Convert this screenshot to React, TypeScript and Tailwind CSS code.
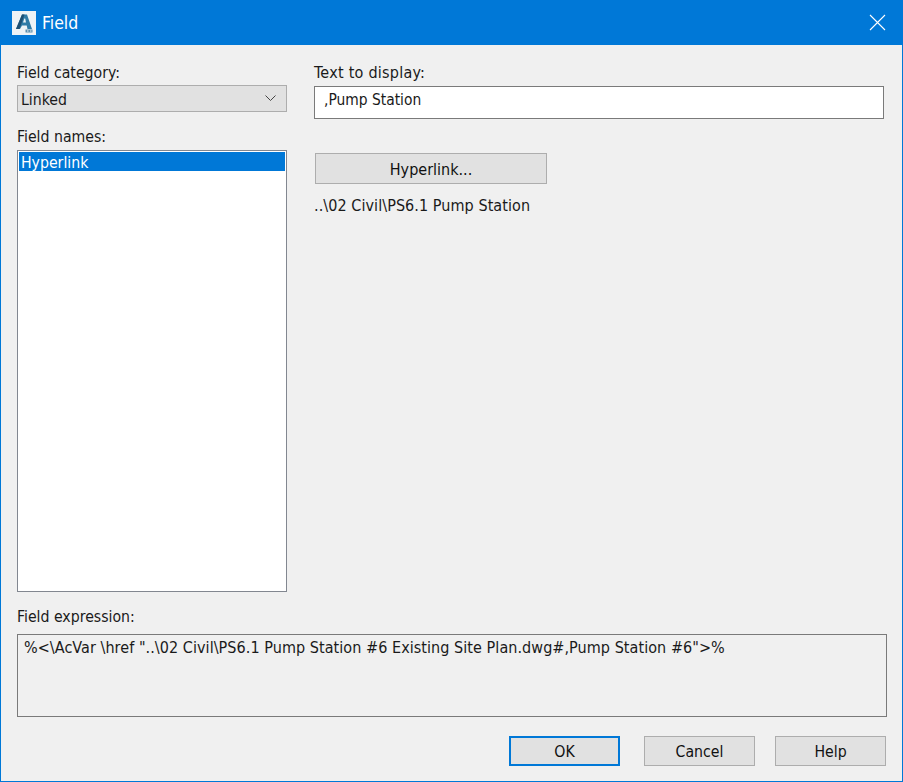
const font = "font-['DejaVu_Sans_Condensed','Noto_Sans',sans-serif]";

function AutoCadIcon() {
  return (
    <div className="flex h-6 w-6 items-center justify-center bg-[#eef3f6]">
      <svg width="24" height="24" viewBox="0 0 24 24">
        <path d="M4 18 L10 3.5 H15 L20 18 H15.5 L14.7 14.5 H10 L8 18 Z" fill="#2f7ba6" />
        <path d="M12.3 7.5 L11 11.5 H14 L13.2 7.5 Z" fill="#eef3f6" />
        <path d="M10 3.5 H12.5 L7.5 18 H4 Z" fill="#1d4f73" />
        <rect x="13.5" y="18.5" width="7" height="3" fill="#5b8fae" />
        <rect x="15" y="19.5" width="1.5" height="1" fill="#eef3f6" />
        <rect x="18" y="19.5" width="1.5" height="1" fill="#eef3f6" />
      </svg>
    </div>
  );
}

function Button({ label, className }: { label: string; className: string }) {
  return (
    <button className={`flex items-center justify-center bg-[#e1e1e1] pt-[2px] text-[#111] ${className}`}>
      {label}
    </button>
  );
}

export default function App() {
  return (
    <div className={`flex h-[782px] w-[903px] flex-col overflow-hidden border border-[#0078d7] border-t-0 bg-[#f0f0f0] text-[15.7px] leading-[20px] text-[#1a1a1a] ${font}`}>
      {/* Title bar */}
      <div className="flex h-[45px] shrink-0 items-center justify-between bg-[#0078d7] pl-[11px] pr-[16px] text-white">
        <div className="flex items-center gap-[6px]">
          <AutoCadIcon />
          <span className="pt-px text-[17.5px]">Field</span>
        </div>
        <svg width="17" height="17" viewBox="0 0 17 17" stroke="#fff" strokeWidth="1.1" fill="none">
          <path d="M1 1 L16 16 M16 1 L1 16" />
        </svg>
      </div>

      {/* Body */}
      <div className="flex flex-col px-4 pt-[17px]">
        <div className="flex h-[530px] gap-[27px]">
          {/* Left column */}
          <div className="flex w-[270px] shrink-0 flex-col">
            <div className="h-[23px] pt-px">Field category:</div>
            <div className="flex h-[27px] items-center justify-between border border-[#adadad] bg-[#e1e1e1] pl-[3px] pr-[10px]">
              <span className="pt-[2px]">Linked</span>
              <svg width="11" height="7" viewBox="0 0 11 7" stroke="#444" strokeWidth="1" fill="none">
                <path d="M0.5 0.5 L5.5 5.5 L10.5 0.5" />
              </svg>
            </div>
            <div className="mt-[14px] h-[24px] pt-px">Field names:</div>
            <div className="h-[442px] border border-[#828790] bg-white p-px">
              <div className="h-[19px] bg-[#0078d7] pl-[2px] pt-px leading-[19px] text-white">Hyperlink</div>
            </div>
          </div>

          {/* Right column */}
          <div className="flex w-[570px] flex-col">
            <div className="h-[24px] pt-px text-[16px] tracking-[0.25px]">Text to display:</div>
            <div className="h-[33px] border border-[#7a7a7a] bg-white pl-[9px] pt-[3px] text-[15.4px]">,Pump Station</div>
            <Button label="Hyperlink..." className="ml-px mt-[34px] h-[31px] w-[232px] border border-[#adadad] text-[16px]" />
            <div className="mt-[11px] pt-px text-[16px] tracking-[0.07px]">..\02 Civil\PS6.1 Pump Station</div>
          </div>
        </div>

        <div className="mt-[14px] h-[28px] pt-px">Field expression:</div>
        <div className="h-[83px] w-[870px] border border-[#7a7a7a] pl-[6px] pt-[3px] text-[16px] tracking-[0.06px]">
          %&lt;\AcVar \href "..\02 Civil\PS6.1 Pump Station #6 Existing Site Plan.dwg#,Pump Station #6"&gt;%
        </div>

        {/* Buttons */}
        <div className="mt-[19px] flex w-[869px] justify-end">
          <Button label="OK" className="h-[30px] w-[111px] border-2 border-[#0078d7]" />
          <Button label="Cancel" className="ml-6 h-[30px] w-[111px] border border-[#adadad]" />
          <Button label="Help" className="ml-5 h-[30px] w-[111px] border border-[#adadad]" />
        </div>
      </div>
    </div>
  );
}
